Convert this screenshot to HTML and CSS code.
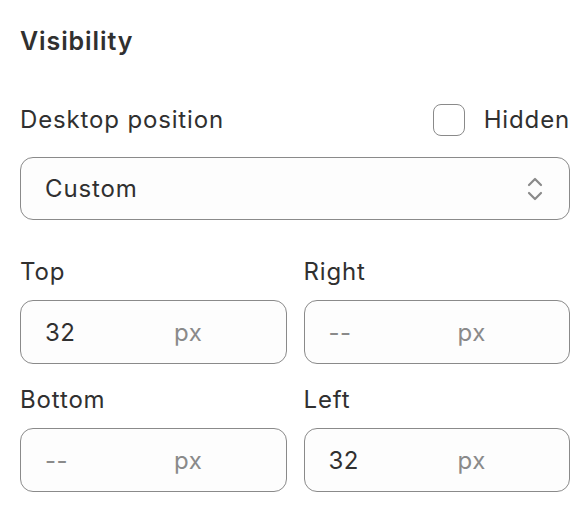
FILE: index.html
```html
<!DOCTYPE html>
<html>
<head>
<meta charset="utf-8">
<link rel="stylesheet" href="styles.css">
</head>
<body>
<div class="panel">
  <h2 class="title">Visibility</h2>
  <div class="row-head">
    <span class="label">Desktop position</span>
    <label class="check"><span class="box"></span><span class="label">Hidden</span></label>
  </div>
  <div class="select">
    <span class="value">Custom</span>
    <svg class="chev" width="16" height="26" viewBox="0 0 16 26"><path d="M2 9 L8 3 L14 9 M2 17 L8 23 L14 17" fill="none" stroke="#8a8a8a" stroke-width="2.2" stroke-linecap="round" stroke-linejoin="round"/></svg>
  </div>
  <div class="grid">
    <div class="field">
      <span class="label">Top</span>
      <div class="input"><span class="num">32</span><span class="unit">px</span></div>
    </div>
    <div class="field">
      <span class="label">Right</span>
      <div class="input"><span class="num muted">--</span><span class="unit">px</span></div>
    </div>
    <div class="field">
      <span class="label">Bottom</span>
      <div class="input"><span class="num muted">--</span><span class="unit">px</span></div>
    </div>
    <div class="field">
      <span class="label">Left</span>
      <div class="input"><span class="num">32</span><span class="unit">px</span></div>
    </div>
  </div>
</div>
</body>
</html>
```
FILE: styles.css
```css
* { box-sizing: border-box; }
body {
  margin: 0;
  background: #ffffff;
  font-family: Inter, "Noto Sans", sans-serif;
  color: #303030;
}
.panel {
  padding: 24px 2px 0 20px;
  width: 572px;
}
.title {
  margin: 0;
  font-size: 25px;
  font-weight: 600;
  line-height: 34px;
  letter-spacing: 0.9px;
  color: #303030;
}
.label {
  font-size: 24px;
  line-height: 32px;
  letter-spacing: 0.85px;
  color: #303030;
}
.row-head {
  margin-top: 45px;
  display: flex;
  justify-content: space-between;
  align-items: center;
  height: 34px;
}
.check {
  display: flex;
  align-items: center;
  gap: 19px;
}
.box {
  width: 32px;
  height: 32px;
  border: 1.5px solid #8a8a8a;
  border-radius: 8px;
  background: #fff;
}
.select {
  margin-top: 20px;
  height: 63px;
  border: 1.5px solid #8a8a8a;
  border-radius: 13px;
  background: #fdfdfd;
  display: flex;
  align-items: center;
  justify-content: space-between;
  padding: 0 26px 0 24px;
}
.value {
  font-size: 24px;
  letter-spacing: 0.85px;
  color: #303030;
}
.chev { display: block; }
.grid {
  margin-top: 36px;
  display: grid;
  grid-template-columns: 1fr 1fr;
  column-gap: 17px;
  row-gap: 20px;
}
.field {
  display: flex;
  flex-direction: column;
  gap: 12px;
}
.input {
  height: 64px;
  border: 1.5px solid #8a8a8a;
  border-radius: 13px;
  background: #fdfdfd;
  display: flex;
  align-items: center;
  padding-left: 24px;
}
.num {
  font-size: 24px;
  width: 129px;
  letter-spacing: 0.5px;
  color: #303030;
}
.num.muted { color: #8a8a8a; }
.unit {
  font-size: 24px;
  letter-spacing: 0.5px;
  color: #8a8a8a;
}
```
